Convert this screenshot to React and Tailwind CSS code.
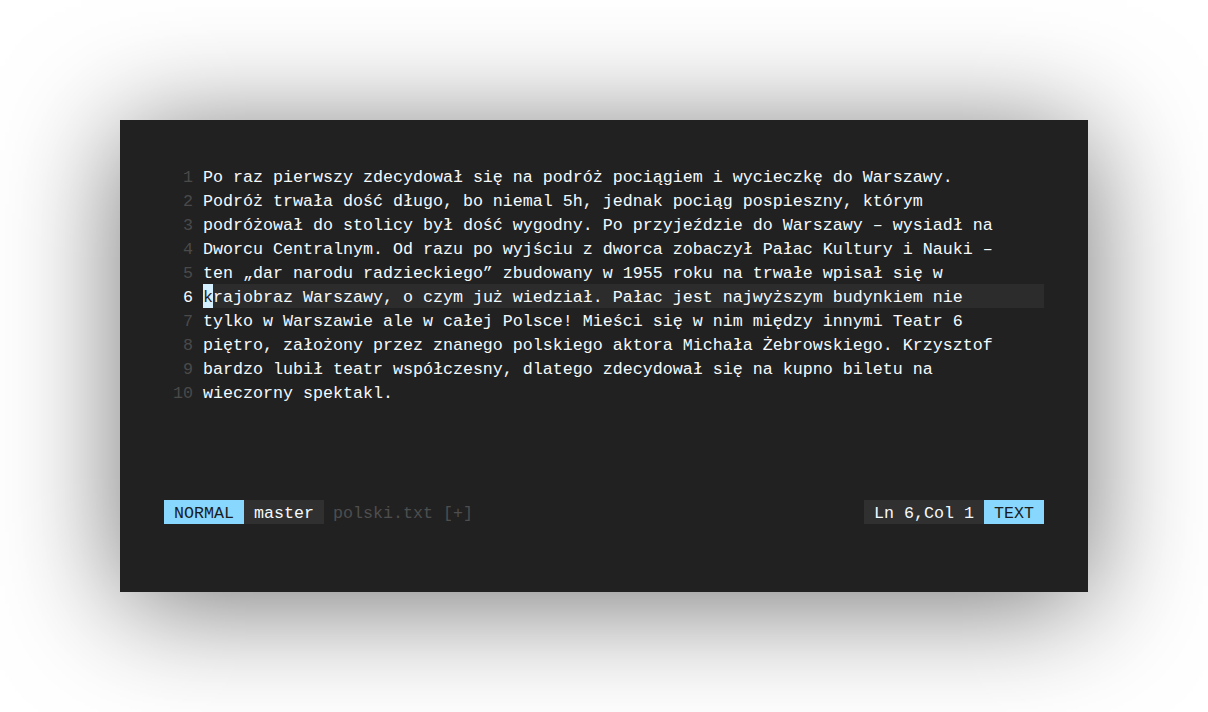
import React from "react";

const lines = [
  "Po raz pierwszy zdecydował się na podróż pociągiem i wycieczkę do Warszawy.",
  "Podróż trwała dość długo, bo niemal 5h, jednak pociąg pospieszny, którym",
  "podróżował do stolicy był dość wygodny. Po przyjeździe do Warszawy – wysiadł na",
  "Dworcu Centralnym. Od razu po wyjściu z dworca zobaczył Pałac Kultury i Nauki –",
  "ten „dar narodu radzieckiego” zbudowany w 1955 roku na trwałe wpisał się w",
  "krajobraz Warszawy, o czym już wiedział. Pałac jest najwyższym budynkiem nie",
  "tylko w Warszawie ale w całej Polsce! Mieści się w nim między innymi Teatr 6",
  "piętro, założony przez znanego polskiego aktora Michała Żebrowskiego. Krzysztof",
  "bardzo lubił teatr współczesny, dlatego zdecydował się na kupno biletu na",
  "wieczorny spektakl.",
];

const CURRENT = 6;

const Line = ({ num, text }) => {
  const active = num === CURRENT;
  return (
    <div className="flex h-6">
      <span
        className={`w-[39px] shrink-0 pt-[3px] pr-[10px] text-right leading-[21px] ${
          active ? "text-[#f5faff]" : "text-[#4a4a4a]"
        }`}
      >
        {num}
      </span>
      <span
        className={`flex h-6 flex-1 whitespace-pre ${active ? "bg-[#2c2c2c]" : ""}`}
      >
        {active ? (
          <>
            <span className="h-6 bg-[#d4f0ff] pt-[3px] leading-[21px] text-[#1e1e1e]">
              {text[0]}
            </span>
            <span className="pt-[3px] leading-[21px]">{text.slice(1)}</span>
          </>
        ) : (
          <span className="pt-[3px] leading-[21px]">{text}</span>
        )}
      </span>
    </div>
  );
};

const App = () => {
  return (
    <div className="flex h-[712px] w-full items-center justify-center bg-white">
      <div
        className="flex h-[472px] w-[968px] flex-col bg-[#212121] px-[44px] pt-[44px] pb-[68px] text-[16.67px] leading-6 text-[#f5faff] shadow-[0_12px_110px_rgba(0,0,0,0.55)]"
        style={{ fontFamily: '"Liberation Mono", "DejaVu Sans Mono", monospace' }}
      >
        {/* editor buffer */}
        <div className="flex flex-col">
          {lines.map((t, i) => (
            <Line key={i} num={i + 1} text={t} />
          ))}
        </div>

        {/* status line */}
        <div className="mt-auto flex h-6 justify-between whitespace-pre leading-[21px]">
          <div className="flex h-6">
            <span className="h-6 bg-[#87d7ff] px-[10px] pt-[3px] text-[#1c1c1c]">
              NORMAL
            </span>
            <span className="h-6 bg-[#303030] px-[10px] pt-[3px]">master</span>
            <span className="ml-[9px] pt-[3px] text-[#4e4e4e]">polski.txt [+]</span>
          </div>
          <div className="flex h-6">
            <span className="h-6 bg-[#303030] px-[10px] pt-[3px]">Ln 6,Col 1</span>
            <span className="h-6 bg-[#87d7ff] px-[10px] pt-[3px] text-[#1c1c1c]">
              TEXT
            </span>
          </div>
        </div>
      </div>
    </div>
  );
};

export default App;
